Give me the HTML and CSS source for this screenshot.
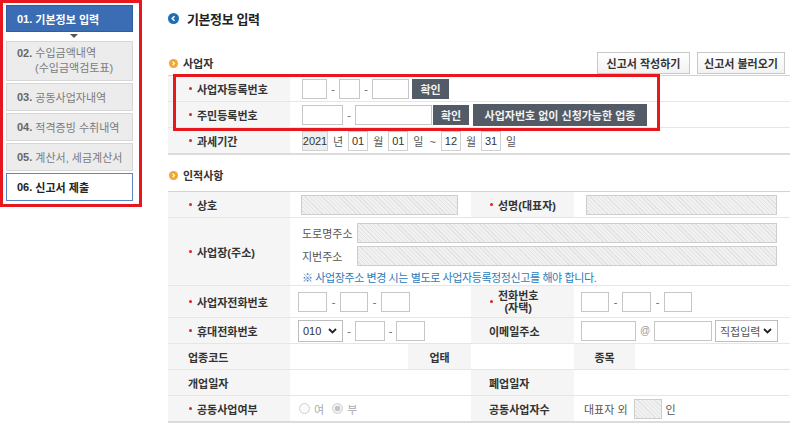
FILE: index.html
```html
<!DOCTYPE html>
<html lang="ko">
<head>
<meta charset="utf-8">
<title>기본정보 입력</title>
<link rel="stylesheet" href="styles.css">
</head>
<body>
<div class="page">
  <aside class="side">
    <div class="step active"><b>01.</b>&nbsp;기본정보 입력</div>
    <div class="arrow"></div>
    <div class="step tall"><span><b>02.</b>&nbsp;수입금액내역</span><span class="sub">(수입금액검토표)</span></div>
    <div class="step"><b>03.</b>&nbsp;공동사업자내역</div>
    <div class="step"><b>04.</b>&nbsp;적격증빙 수취내역</div>
    <div class="step"><b>05.</b>&nbsp;계산서, 세금계산서</div>
    <div class="step current"><b>06.</b>&nbsp;신고서 제출</div>
  </aside>

  <main class="main">
    <h1 class="title">
      <svg class="ico-title" width="11" height="11" viewBox="0 0 11 11"><circle cx="5.5" cy="5.5" r="5.5" fill="#1f6db5"/><path d="M6.5 3.2 L4.2 5.5 L6.5 7.8" fill="none" stroke="#fff" stroke-width="1.5"/></svg>
      기본정보 입력
    </h1>

    <div class="sec-head">
      <h2 class="sec">
        <svg class="ico-sec" width="9" height="9" viewBox="0 0 9 9"><circle cx="4.5" cy="4.5" r="4.5" fill="#f2a531"/><path d="M3.6 2.6 L5.4 4.5 L3.6 6.4" fill="none" stroke="#fff" stroke-width="1.3"/></svg>
        사업자
      </h2>
      <div class="btns">
        <button class="btn">신고서 작성하기</button>
        <button class="btn">신고서 불러오기</button>
      </div>
    </div>

    <div class="t1">
      <div class="row">
        <div class="lb"><i class="req"></i>사업자등록번호</div>
        <div class="v1">
          <span class="in w25"></span><span class="dash">-</span><span class="in w21"></span><span class="dash">-</span><span class="in w37"></span><button class="dk w37 ml3">확인</button>
        </div>
      </div>
      <div class="row">
        <div class="lb"><i class="req"></i>주민등록번호</div>
        <div class="v1">
          <span class="in w41"></span><span class="dash">-</span><span class="in w77"></span><button class="dk w36 ml1">확인</button><button class="dk wide ml4">사업자번호 없이 신청가능한 업종</button>
        </div>
      </div>
      <div class="row last">
        <div class="lb"><i class="req"></i>과세기간</div>
        <div class="v1">
          <span class="box gray w26">2021</span><span class="unit">년</span><span class="box">01</span><span class="unit">월</span><span class="box">01</span><span class="unit">일&nbsp; ~</span><span class="box">12</span><span class="unit">월</span><span class="box">31</span><span class="unit">일</span>
        </div>
      </div>
      <div class="mark"></div>
    </div>

    <h2 class="sec sec2">
      <svg class="ico-sec" width="9" height="9" viewBox="0 0 9 9"><circle cx="4.5" cy="4.5" r="4.5" fill="#f2a531"/><path d="M3.6 2.6 L5.4 4.5 L3.6 6.4" fill="none" stroke="#fff" stroke-width="1.3"/></svg>
      인적사항
    </h2>

    <div class="grid">
      <!-- 상호 -->
      <div class="lb"><i class="req"></i>상호</div>
      <div class="v s2 pl11"><span class="hatch w157"></span></div>
      <div class="lb lb2"><i class="req"></i>성명(대표자)</div>
      <div class="v s2 pl12"><span class="hatch w191"></span></div>

      <!-- 사업장 -->
      <div class="lb"><i class="req"></i>사업장(주소)</div>
      <div class="v s5 addr">
        <div class="aline"><span class="alabel">도로명주소</span><span class="hatch w420"></span></div>
        <div class="aline"><span class="alabel">지번주소</span><span class="hatch w420"></span></div>
        <p class="note">※ 사업장주소 변경 시는 별도로 사업자등록정정신고를 해야 합니다.</p>
      </div>

      <!-- 사업자전화번호 -->
      <div class="lb"><i class="req"></i>사업자전화번호</div>
      <div class="v s2 pl8"><span class="in w29"></span><span class="dash d13">-</span><span class="in w28"></span><span class="dash d13">-</span><span class="in w29"></span></div>
      <div class="lb lb2"><i class="req"></i><span class="two">전화번호<br>(자택)</span></div>
      <div class="v s2 pl7"><span class="in w28"></span><span class="dash d13">-</span><span class="in w29"></span><span class="dash d13">-</span><span class="in w28"></span></div>

      <!-- 휴대전화번호 -->
      <div class="lb"><i class="req"></i>휴대전화번호</div>
      <div class="v s2 pl8">
        <span class="sel w45"><span class="num">010</span><svg width="9" height="6" viewBox="0 0 9 6"><path d="M1 1 L4.5 4.5 L8 1" fill="none" stroke="#222" stroke-width="1.8"/></svg></span><span class="dash">-</span><span class="in w30"></span><span class="dash d11">-</span><span class="in w29"></span>
      </div>
      <div class="lb lb2">이메일주소</div>
      <div class="v s2 pl7">
        <span class="in w55"></span><span class="at">@</span><span class="in w58"></span><span class="sel w63 ml3"><span class="seltxt">직접입력</span><svg width="9" height="6" viewBox="0 0 9 6"><path d="M1 1 L4.5 4.5 L8 1" fill="none" stroke="#222" stroke-width="1.8"/></svg></span>
      </div>

      <!-- 업종코드 -->
      <div class="lb">업종코드</div>
      <div class="v"></div>
      <div class="lb c">업태</div>
      <div class="v"></div>
      <div class="lb c">종목</div>
      <div class="v"></div>

      <!-- 개업일자 -->
      <div class="lb">개업일자</div>
      <div class="v s2"></div>
      <div class="lb lb2">폐업일자</div>
      <div class="v s2"></div>

      <!-- 공동사업여부 -->
      <div class="lb last"><i class="req"></i>공동사업여부</div>
      <div class="v s2 last pl8 radios">
        <span class="radio"></span><span class="rtxt">여</span><span class="radio on"></span><span class="rtxt">부</span>
      </div>
      <div class="lb lb2 last">공동사업자수</div>
      <div class="v s2 last pl10">
        <span class="rep">대표자 외</span><span class="hatch w28"></span><span class="in-unit">인</span>
      </div>
    </div>
  </main>
</div>
</body>
</html>
```

FILE: styles.css
```css
* { box-sizing: border-box; margin: 0; padding: 0; }

body {
  margin: 0;
  width: 800px;
  height: 432px;
  overflow: hidden;
  background: #fff;
  color: #333;
  font-family: "Liberation Sans", "Noto Sans CJK KR", sans-serif;
  font-size: 11px;
  letter-spacing: 0;
}

.page { display: flex; align-items: flex-start; }

/* ---------- sidebar ---------- */
.side {
  width: 142px;
  border: 3px solid #e8161d;
  padding: 2px 6px 3px 3px;
  display: flex;
  flex-direction: column;
  gap: 2px;
}
.step {
  height: 28px;
  display: flex;
  align-items: center;
  padding-left: 10px;
  background: #ececec;
  border: 1px solid #d6d6d6;
  color: #7b7b7b;
  white-space: nowrap;
}
.step b { color: #666; }
.step.tall {
  height: 40px;
  flex-direction: column;
  align-items: flex-start;
  justify-content: center;
  line-height: 15px;
}
.step .sub { padding-left: 18px; }
.step.active {
  height: 27px;
  background: #3b6db5;
  border-color: #2f5e9f;
  color: #fff;
  font-weight: bold;
}
.step.active b { color: #fff; }
.step.current {
  background: #fff;
  border-color: #5a86c6;
  color: #222;
  font-weight: bold;
}
.step.current b { color: #222; }
.arrow {
  height: 5px;
  display: flex;
  justify-content: center;
  padding-left: 8px;
}
.arrow::before {
  content: "";
  width: 0;
  height: 0;
  border-left: 4px solid transparent;
  border-right: 4px solid transparent;
  border-top: 4px solid #555;
}

/* ---------- main ---------- */
.main { margin-left: 26px; width: 622px; }

.title {
  margin-top: 9px;
  height: 18px;
  display: flex;
  align-items: center;
  font-size: 13px;
  font-weight: bold;
  letter-spacing: -0.4px;
  color: #222;
}
.ico-title { margin-right: 8px; flex: none; }

.sec-head {
  margin-top: 25px;
  height: 22px;
  display: flex;
  align-items: center;
  justify-content: space-between;
}
.sec {
  display: flex;
  align-items: center;
  font-size: 11px;
  font-weight: bold;
  color: #333;
}
.ico-sec { margin: 0 5px 0 1px; flex: none; }
.sec2 { margin-top: 12px; height: 16px; }

.btns { display: flex; gap: 7px; margin-right: 5px; }
.btn {
  height: 22px;
  padding: 0;
  white-space: nowrap;
  text-align: center;
  border: 1px solid #c8c8c8;
  background: linear-gradient(#fff, #f2f2f2);
  font-family: inherit;
  font-size: 11px;
  font-weight: bold;
  color: #333;
}
.btn:first-child { width: 93px; }
.btn:last-child { width: 88px; }

/* ---------- table 1 ---------- */
.t1 {
  position: relative;
  margin-top: 1px;
  border-top: 1px solid #d2d2d2;
}
.row {
  display: grid;
  grid-template-columns: 122px 1fr;
  height: 26px;
  border-bottom: 1px solid #e6e6e6;
}
.row.last { height: 27px; border-bottom: 2px solid #dcdcdc; }
.v1 { display: flex; align-items: center; padding-left: 12px; }

.mark {
  position: absolute;
  left: 5px;
  top: -2px;
  width: 487px;
  height: 57px;
  border: 3px solid #e8161d;
}

/* ---------- shared cells ---------- */
.lb {
  display: flex;
  align-items: center;
  background: #f5f5f5;
  font-weight: bold;
  color: #333;
  padding-left: 20px;
  white-space: nowrap;
}
.lb2 { padding-left: 18px; }
.lb.c { justify-content: center; padding-left: 0; }
.req {
  width: 3px;
  height: 3px;
  border-radius: 50%;
  background: #d92229;
  margin: 0 5px 0 1px;
  flex: none;
}
.two { display: inline-block; text-align: center; line-height: 12px; }

.in {
  display: inline-block;
  height: 20px;
  border: 1px solid #c6c6c6;
  background: #fff;
  flex: none;
}
.hatch {
  display: inline-block;
  height: 20px;
  border: 1px solid #cdcdcd;
  background: repeating-linear-gradient(45deg, #f1f1f1 0 2px, #e3e3e3 2px 3px);
  flex: none;
}
.dash { width: 12px; text-align: center; color: #666; flex: none; }
.d13 { width: 13px; }
.d11 { width: 11px; }
.at { width: 18px; text-align: center; color: #999; font-size: 10px; flex: none; }

.dk {
  height: 20px;
  border: 0;
  background: #525b66;
  color: #f2f2f2;
  font-family: inherit;
  font-size: 11px;
  font-weight: bold;
  white-space: nowrap;
  flex: none;
}
.dk.wide { width: 174px; height: 22px; }

.box {
  display: inline-flex;
  align-items: center;
  justify-content: center;
  width: 20px;
  height: 20px;
  border: 1px solid #d0d0d0;
  background: #fff;
  color: #333;
  flex: none;
}
.box.gray { background: #efefef; }
.unit { margin: 0 5px; color: #555; white-space: nowrap; }

.sel {
  display: inline-flex;
  align-items: center;
  justify-content: space-between;
  height: 22px;
  border: 1px solid #bdbdbd;
  background: #fff;
  padding: 0 5px 0 4px;
  flex: none;
}
.num { color: #333; }
.seltxt { color: #555; }

/* ---------- table 2 ---------- */
.grid {
  margin-top: 8px;
  display: grid;
  grid-template-columns: 122px 118px 63px 103px 61px 155px;
  grid-template-rows: 26px 68px 32px 26px 26px 26px 27px;
  border-top: 1px solid #d2d2d2;
}
.grid > div { border-bottom: 1px solid #e6e6e6; }
.grid > .last { border-bottom: 2px solid #dcdcdc; }
.v { display: flex; align-items: center; background: #fff; }
.s2 { grid-column: span 2; }
.s5 { grid-column: span 5; }
.pl7 { padding-left: 7px; }
.pl8 { padding-left: 8px; }
.pl10 { padding-left: 10px; }
.pl11 { padding-left: 11px; }
.pl12 { padding-left: 12px; }

.addr {
  flex-direction: column;
  align-items: flex-start;
  padding: 5px 0 0 12px;
  gap: 3px;
}
.aline { display: flex; align-items: center; height: 20px; }
.alabel { width: 55px; color: #555; }
.note {
  margin-top: 2px;
  color: #2b7bb9;
  letter-spacing: -0.4px;
  line-height: 14px;
}

.radio {
  width: 11px;
  height: 11px;
  border: 1px solid #cfcfcf;
  border-radius: 50%;
  background: #fafafa;
  margin-left: 1px;
  flex: none;
}
.radio.on {
  background: radial-gradient(circle, #c4c4c4 0 2.5px, #f0f0f0 3px);
  margin-left: 8px;
}
.rtxt { color: #aaa; margin-left: 4px; }

.rep { color: #555; margin-right: 6px; }
.in-unit { margin-left: 4px; color: #555; }

/* widths */
.w21 { width: 21px; }
.w25 { width: 25px; }
.w26 { width: 26px; }
.w28 { width: 28px; }
.w29 { width: 29px; }
.w30 { width: 30px; }
.w36 { width: 36px; }
.w37 { width: 37px; }
.w41 { width: 41px; }
.w45 { width: 45px; }
.w55 { width: 55px; }
.w58 { width: 58px; }
.w63 { width: 63px; }
.w77 { width: 77px; }
.w157 { width: 157px; }
.w191 { width: 191px; }
.w420 { width: 420px; }
.ml1 { margin-left: 1px; }
.ml3 { margin-left: 3px; }
.ml4 { margin-left: 4px; }
```
